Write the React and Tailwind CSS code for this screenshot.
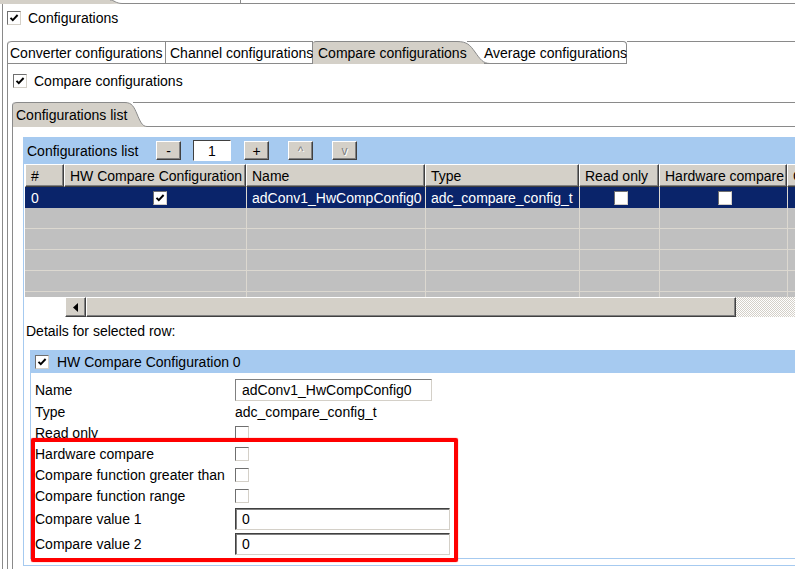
import React from "react";

// classic win32-ish widgets
const Check = ({ checked }) => (
  <span className="inline-flex w-[14px] h-[14px] shrink-0 items-center justify-center bg-white border border-t-[#6f6f6f] border-l-[#6f6f6f] border-r-[#d4d0c8] border-b-[#d4d0c8]">
    {checked && (
      <svg width="10" height="10" viewBox="0 0 10 10">
        <path d="M1.5 4.8 L3.8 7.2 L8.6 2" fill="none" stroke="#000" strokeWidth="1.9" />
      </svg>
    )}
  </span>
);

const Field = ({ value, wide }) => (
  <div
    className={
      wide
        ? "h-[22px] w-[215px] bg-white border border-t-[#404040] border-l-[#404040] border-r-[#d4d0c8] border-b-[#d4d0c8] shadow-[inset_1px_1px_0_#808080] flex items-center pl-[6px]"
        : "h-[22px] w-[197px] bg-white border border-t-[#808080] border-l-[#808080] border-r-[#d4d0c8] border-b-[#d4d0c8] flex items-center pl-[6px]"
    }
  >
    {value}
  </div>
);

const Btn = ({ children, disabled }) => (
  <div
    className={
      disabled
        ? "w-[25px] h-[19px] bg-[#d4d0c8] border border-t-white border-l-white border-r-[#404040] border-b-[#404040] shadow-[inset_-1px_-1px_0_#808080] flex items-center justify-center text-[#808080] [text-shadow:1px_1px_0_#fff] text-[12px]"
        : "w-[25px] h-[19px] bg-[#d4d0c8] border border-t-white border-l-white border-r-[#404040] border-b-[#404040] shadow-[inset_-1px_-1px_0_#808080] flex items-center justify-center"
    }
  >
    {children}
  </div>
);

const columns = [
  { label: "HW Compare Configuration", w: "w-[182px]" },
  { label: "Name", w: "w-[179px]" },
  { label: "Type", w: "w-[154px]" },
  { label: "Read only", w: "w-[80px]" },
  { label: "Hardware compare", w: "w-[128px]" },
  { label: "Compare function greater than", w: "w-[220px]" },
];

const details = [
  { label: "Hardware compare", kind: "check" },
  { label: "Compare function greater than", kind: "check" },
  { label: "Compare function range", kind: "check" },
];

const EmptyRow = ({ h }) => (
  <div className={h ? "flex h-[5px] bg-[#c0c0c0]" : "flex h-[21px] bg-[#c0c0c0] border-b border-[#dcd8d0]"}>
    <div className="w-[39px] shrink-0" />
    <div className="w-[182px] shrink-0" />
    <div className="w-[179px] shrink-0 border-l border-[#dcd8d0]" />
    <div className="w-[154px] shrink-0 border-l border-[#dcd8d0]" />
    <div className="w-[80px] shrink-0 border-l border-[#dcd8d0]" />
    <div className="w-[128px] shrink-0 border-l border-[#dcd8d0]" />
    <div className="w-[220px] shrink-0 border-l border-[#dcd8d0]" />
  </div>
);

export default function App() {
  return (
    <div className="relative w-[795px] h-[569px] overflow-hidden bg-white text-[14px] leading-none text-black whitespace-nowrap font-['Liberation_Sans',Arial,sans-serif] flex flex-col">
      {/* remnant of the upper tab strip */}
      <div className="flex h-[4px] shrink-0">
        <div className="w-[110px] bg-[#d4d0c8]" />
        <svg width="12" height="4" viewBox="0 0 12 4" className="shrink-0">
          <path d="M0 0 C4 0 6 3.5 12 3.5 L0 4 Z" fill="#d4d0c8" />
          <path d="M0 0 C4 0 6 3.5 12 3.5" fill="none" stroke="#8a8a8a" />
        </svg>
        <div className="w-[119px] border-b border-r border-[#8a8a8a]" />
        <div className="flex-1 border-b border-[#8a8a8a]" />
      </div>

      <div className="flex-1 ml-[2px] border-l border-[#8a8a8a] flex flex-col">
        <div className="flex items-center pl-[4px] pt-[7px] h-[21px] gap-[7px]">
          <Check checked />
          <span>Configurations</span>
        </div>

        {/* outer tab folder */}
        <div className="mt-[16px] ml-[4px] border-l border-[#8a8a8a] rounded-tl-[4px] flex-1 flex flex-col">
          <div className="flex h-[23px] shrink-0">
            <div className="w-[158px] shrink-0 border-t border-b border-r border-[#8a8a8a] rounded-tl-[4px] flex items-center pl-[2px]">
              Converter configurations
            </div>
            <div className="w-[147px] shrink-0 border-t border-b border-r border-[#8a8a8a] flex items-center pl-[4px]">
              Channel configurations
            </div>
            <div className="w-[144px] shrink-0 border-t border-[#8a8a8a] bg-[#d4d0c8] flex items-center pl-[5px] rounded-tl-[3px]">
              <span className="relative z-10">Compare configurations</span>
            </div>
            <svg width="33" height="23" viewBox="0 0 33 23" className="shrink-0">
              <path d="M0 0.5 C10 0.5 13 4 18 11 C23 18 26 22.5 33 22.5 L33 23 L0 23 Z" fill="#d4d0c8" />
              <path d="M0 0.5 C10 0.5 13 4 18 11 C23 18 26 22.5 33 22.5" fill="none" stroke="#8a8a8a" />
              <path d="M10 0.5 L33 0.5" stroke="#8a8a8a" />
            </svg>
            <div className="w-[143px] shrink-0 ml-[-6px] border-t border-b border-r border-[#8a8a8a] rounded-tr-[4px] flex items-center">
              <span className="relative z-10">Average configurations</span>
            </div>
            <div className="flex-1 border-t border-[#8a8a8a]" />
          </div>

          <div className="flex items-center pl-[5px] pt-[10px] h-[24px] gap-[7px]">
            <Check checked />
            <span>Compare configurations</span>
          </div>

          {/* inner tab folder */}
          <div className="mt-[14px] ml-[4px] border-l border-[#8a8a8a] rounded-tl-[4px] flex-1 flex flex-col">
            <div className="flex h-[25px] shrink-0">
              <div className="w-[112px] shrink-0 border-t border-[#8a8a8a] bg-[#d4d0c8] rounded-tl-[4px] flex items-center pl-[3px]">
                <span className="relative z-10">Configurations list</span>
              </div>
              <svg width="22" height="25" viewBox="0 0 22 25" className="shrink-0">
                <path d="M0 0.5 C7 0.5 9 5 12 12 C15 19 17 24.5 22 24.5 L22 25 L0 25 Z" fill="#d4d0c8" />
                <path d="M0 0.5 C7 0.5 9 5 12 12 C15 19 17 24.5 22 24.5" fill="none" stroke="#8a8a8a" />
                <path d="M8 0.5 L22 0.5" stroke="#8a8a8a" />
              </svg>
              <div className="flex-1 border-t border-b border-[#8a8a8a]" />
            </div>

            {/* list section */}
            <div className="ml-[10px] mt-[10px] border-l border-b border-[#a6caf0] pb-[6px] flex flex-col">
              <div className="h-[27px] bg-[#a6caf0] flex items-center pl-[3px]">
                <span className="w-[129px]">Configurations list</span>
                <Btn>-</Btn>
                <div className="ml-[12px] w-[38px] h-[21px] bg-white border border-t-[#404040] border-l-[#404040] border-r-white border-b-white flex items-center justify-center">
                  1
                </div>
                <div className="ml-[13px]">
                  <Btn>+</Btn>
                </div>
                <div className="ml-[19px]">
                  <Btn disabled>^</Btn>
                </div>
                <div className="ml-[19px]">
                  <Btn disabled>v</Btn>
                </div>
              </div>

              <div className="ml-[1px] flex flex-col w-[1000px]">
                <div className="flex h-[23px]">
                  <div className="w-[39px] shrink-0 bg-[#d4d0c8] border border-t-white border-l-white border-r-[#404040] border-b-[#404040] shadow-[inset_-1px_-1px_0_#808080] flex items-center pl-[5px]">
                    #
                  </div>
                  {columns.map((c) => (
                    <div
                      key={c.label}
                      className={`${c.w} shrink-0 bg-[#d4d0c8] border border-t-white border-l-white border-r-[#404040] border-b-[#404040] shadow-[inset_-1px_-1px_0_#808080] flex items-center pl-[5px] overflow-hidden`}
                    >
                      {c.label}
                    </div>
                  ))}
                </div>

                <div className="flex h-[21px] bg-[#0a246a] text-white">
                  <div className="w-[39px] shrink-0 flex items-center pl-[6px]">0</div>
                  <div className="w-[182px] shrink-0 flex items-center justify-center pl-[10px]">
                    <Check checked />
                  </div>
                  <div className="w-[179px] shrink-0 border-l border-[#dcd8d0] flex items-center pl-[5px] overflow-hidden">
                    adConv1_HwCompConfig0
                  </div>
                  <div className="w-[154px] shrink-0 border-l border-[#dcd8d0] flex items-center pl-[5px] overflow-hidden">
                    adc_compare_config_t
                  </div>
                  <div className="w-[80px] shrink-0 border-l border-[#dcd8d0] flex items-center justify-center pl-[2px]">
                    <Check />
                  </div>
                  <div className="w-[128px] shrink-0 border-l border-[#dcd8d0] flex items-center justify-center pl-[2px]">
                    <Check />
                  </div>
                  <div className="w-[220px] shrink-0 border-l border-[#dcd8d0]" />
                </div>
                <EmptyRow />
                <EmptyRow />
                <EmptyRow />
                <EmptyRow />
                <EmptyRow h />
              </div>

              {/* horizontal scroll bar */}
              <div className="flex h-[20px]">
                <div className="w-[41px] shrink-0" />
                <div className="w-[21px] shrink-0 bg-[#d4d0c8] border border-t-white border-l-white border-r-[#404040] border-b-[#404040] shadow-[inset_-1px_-1px_0_#808080] flex items-center justify-center">
                  <svg width="5" height="9" viewBox="0 0 5 9">
                    <path d="M5 0 L0 4.5 L5 9 Z" fill="#000" />
                  </svg>
                </div>
                <div className="w-[650px] shrink-0 bg-[#d4d0c8] border border-t-white border-l-white border-r-[#404040] border-b-[#404040] shadow-[inset_-1px_-1px_0_#808080]" />
                <div className="flex-1 bg-[repeating-conic-gradient(#d4d0c8_0%_25%,#ffffff_0%_50%)] bg-[length:2px_2px]" />
              </div>

              <div className="mt-[6px] h-[16px] flex items-center pl-[2px]">Details for selected row:</div>

              {/* details */}
              <div className="mt-[11px] ml-[6px] border-l border-b border-[#a6caf0] flex flex-col">
                <div className="h-[23px] bg-[#a6caf0] flex items-center pl-[4px] gap-[8px]">
                  <Check checked />
                  <span>HW Compare Configuration 0</span>
                </div>
                <div className="pt-[4px] pl-[4px] pb-[2px] flex flex-col">
                  <div className="flex items-center h-[25px]">
                    <span className="w-[200px]">Name</span>
                    <Field value="adConv1_HwCompConfig0" />
                  </div>
                  <div className="flex items-center h-[20px]">
                    <span className="w-[200px]">Type</span>
                    <span>adc_compare_config_t</span>
                  </div>
                  <div className="flex items-center h-[21px]">
                    <span className="w-[200px]">Read only</span>
                    <Check />
                  </div>
                  {details.map((d) => (
                    <div key={d.label} className="flex items-center h-[21px]">
                      <span className="w-[200px]">{d.label}</span>
                      <Check />
                    </div>
                  ))}
                  <div className="flex items-center h-[25px]">
                    <span className="w-[200px]">Compare value 1</span>
                    <Field value="0" wide />
                  </div>
                  <div className="flex items-center h-[25px]">
                    <span className="w-[200px]">Compare value 2</span>
                    <Field value="0" wide />
                  </div>
                </div>
              </div>
            </div>
          </div>
        </div>
      </div>

      {/* red annotation frame */}
      <div className="absolute left-[31px] top-[438px] w-[427px] h-[124px] border-[4px] border-[#ff0000] rounded-[2px] shadow-[0_0_1px_#ff0000] pointer-events-none" />
    </div>
  );
}
